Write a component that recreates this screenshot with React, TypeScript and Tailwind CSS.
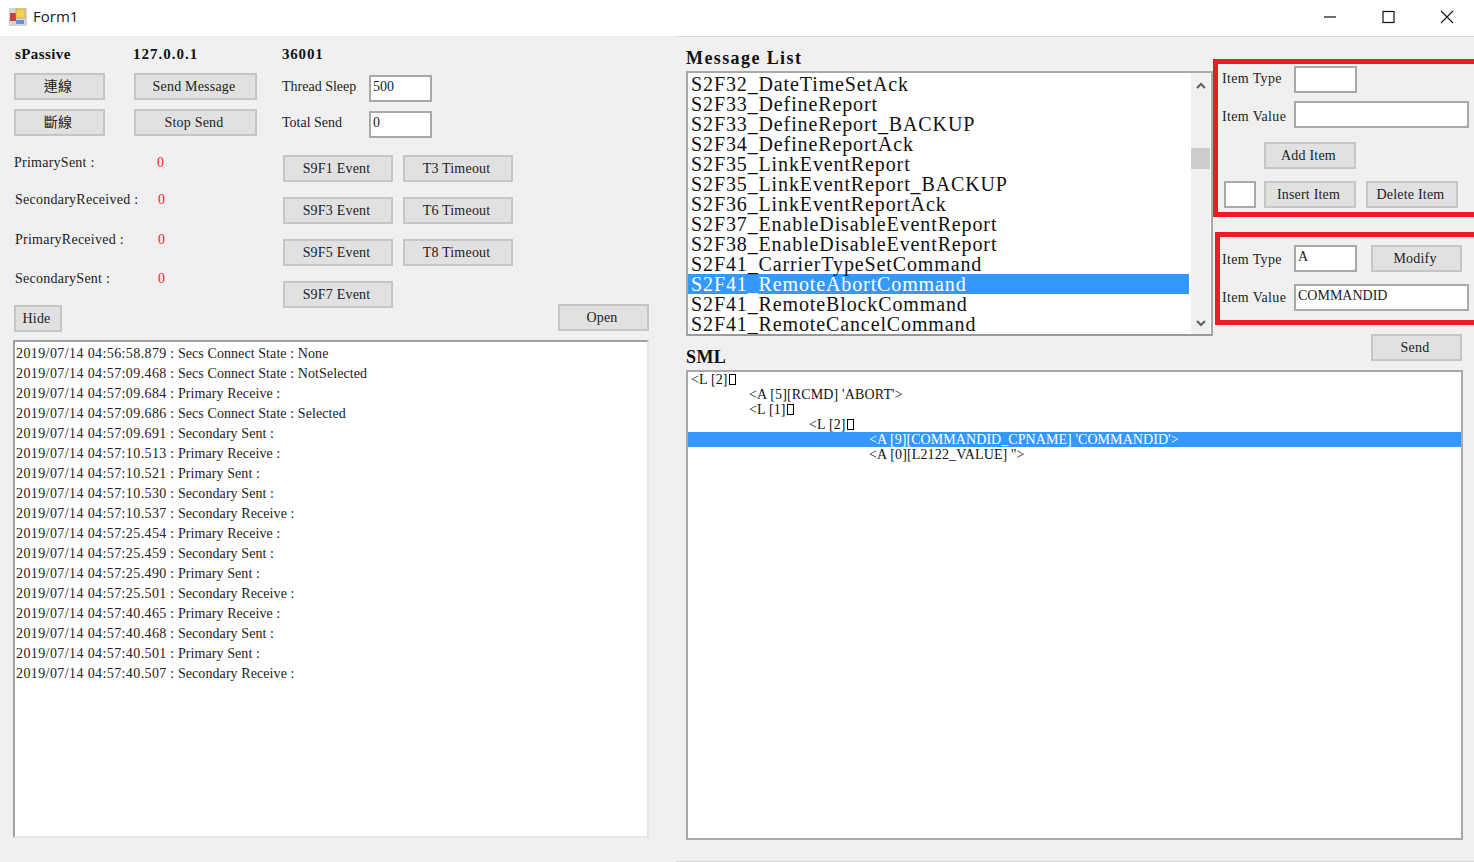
import type { ReactNode } from "react";

const serif = "font-['Liberation_Serif','Noto_Sans_CJK_TC',serif]";

const logLines = [
  "2019/07/14 04:56:58.879 : Secs Connect State : None",
  "2019/07/14 04:57:09.468 : Secs Connect State : NotSelected",
  "2019/07/14 04:57:09.684 : Primary Receive :",
  "2019/07/14 04:57:09.686 : Secs Connect State : Selected",
  "2019/07/14 04:57:09.691 : Secondary Sent :",
  "2019/07/14 04:57:10.513 : Primary Receive :",
  "2019/07/14 04:57:10.521 : Primary Sent :",
  "2019/07/14 04:57:10.530 : Secondary Sent :",
  "2019/07/14 04:57:10.537 : Secondary Receive :",
  "2019/07/14 04:57:25.454 : Primary Receive :",
  "2019/07/14 04:57:25.459 : Secondary Sent :",
  "2019/07/14 04:57:25.490 : Primary Sent :",
  "2019/07/14 04:57:25.501 : Secondary Receive :",
  "2019/07/14 04:57:40.465 : Primary Receive :",
  "2019/07/14 04:57:40.468 : Secondary Sent :",
  "2019/07/14 04:57:40.501 : Primary Sent :",
  "2019/07/14 04:57:40.507 : Secondary Receive :",
];

const messages = [
  "S2F32_DateTimeSetAck",
  "S2F33_DefineReport",
  "S2F33_DefineReport_BACKUP",
  "S2F34_DefineReportAck",
  "S2F35_LinkEventReport",
  "S2F35_LinkEventReport_BACKUP",
  "S2F36_LinkEventReportAck",
  "S2F37_EnableDisableEventReport",
  "S2F38_EnableDisableEventReport",
  "S2F41_CarrierTypeSetCommand",
  "S2F41_RemoteAbortCommand",
  "S2F41_RemoteBlockCommand",
  "S2F41_RemoteCancelCommand",
];

const counters = [
  { label: "PrimarySent :", height: "h-[37px]", indent: "pl-0" },
  { label: "SecondaryReceived :", height: "h-[40px]", indent: "pl-[1px]" },
  { label: "PrimaryReceived :", height: "h-[39px]", indent: "pl-[1px]" },
  { label: "SecondarySent :", height: "h-[26px]", indent: "pl-[1px]" },
];

const Btn = ({ className, children }: { className: string; children: ReactNode }) => (
  <div className={`flex h-[27px] shrink-0 items-center justify-center border-2 border-[#c6c6c6] bg-[#e1e1e1] pr-[3px] text-[14px] tracking-[0.2px] text-[#222] ${className}`}>
    {children}
  </div>
);

const Field = ({ className, children }: { className: string; children?: ReactNode }) => (
  <div className={`h-[27px] shrink-0 border-2 border-[#a9a9a9] bg-white pl-[2px] text-[14px] leading-[20px] text-[#222] ${className}`}>
    {children}
  </div>
);

const Box = () => <span className="ml-[1px] inline-block h-[11px] w-[7px] border border-black align-[-1px]" />;

const SmlLine = ({ indent, selected, children }: { indent: string; selected?: boolean; children: ReactNode }) => (
  <div className={`h-[15px] whitespace-pre text-[14px] leading-[15px] ${indent} ${selected ? "bg-[#3399ff] tracking-[0.07px] text-white" : "tracking-[0.15px] text-[#111]"}`}>
    {children}
  </div>
);

export default function App() {
  return (
    <div className={`flex h-[862px] w-[1474px] flex-col overflow-hidden bg-[#f0f0f0] ${serif}`}>
      {/* title bar */}
      <div className="flex h-[36px] shrink-0 items-center bg-white pb-[3px] pl-[9px]">
        <svg width="18" height="18" viewBox="0 0 18 18">
          <rect x="0" y="0" width="18" height="18" fill="#d4d4d4" />
          <rect x="1" y="5" width="6" height="8" fill="#c8423a" />
          <rect x="7" y="1" width="9" height="9" fill="#f6cf56" stroke="#b89a3a" strokeWidth="0.6" />
          <rect x="7" y="12" width="8" height="4" fill="#5f93e0" />
        </svg>
        <span className="ml-[6px] font-['Open_Sans',sans-serif] text-[15px] text-[#1a1a1a]">Form1</span>
        <div className="ml-auto mr-[-2px] flex items-center">
          <svg width="58" height="16" viewBox="0 0 58 16"><path d="M22 8h12" stroke="#111" strokeWidth="1.2" /></svg>
          <svg width="58" height="16" viewBox="0 0 58 16"><rect x="23" y="2.5" width="11" height="11" fill="none" stroke="#111" strokeWidth="1.2" /></svg>
          <svg width="58" height="16" viewBox="0 0 58 16"><path d="M23 2l12 12M35 2L23 14" stroke="#111" strokeWidth="1.1" /></svg>
        </div>
      </div>

      <div className="flex min-h-0 flex-1">
        {/* left side */}
        <div className="flex w-[676px] shrink-0 flex-col pl-[14px] pt-[8px]">
          <div className="flex">
            <div className="flex w-[268px] shrink-0 flex-col">
              <div className="flex h-[20px] items-center text-[15px] font-bold text-[#111]">
                <span className="w-[119px] pl-[1px] tracking-[0.4px]">sPassive</span>
                <span className="tracking-[1px]">127.0.0.1</span>
              </div>
              <div className="mt-[9px] flex gap-[29px]">
                <Btn className="w-[91px]">連線</Btn>
                <Btn className="w-[123px]">Send Message</Btn>
              </div>
              <div className="mt-[9px] flex gap-[29px]">
                <Btn className="w-[91px]">斷線</Btn>
                <Btn className="w-[123px]">Stop Send</Btn>
              </div>
              <div className="mt-[17px] flex flex-col text-[14px] text-[#222]">
                {counters.map((c) => (
                  <div key={c.label} className={`flex ${c.height} items-start ${c.indent}`}>
                    <span className="w-[143px] shrink-0 whitespace-nowrap leading-[20px] tracking-[0.25px]">{c.label}</span>
                    <span className="leading-[20px] text-[#ff1a1a]">0</span>
                  </div>
                ))}
              </div>
            </div>
            <div className="flex flex-col">
              <div className="flex h-[20px] items-center text-[15px] font-bold tracking-[0.8px] text-[#111]">36001</div>
              <div className="mt-[11px] flex items-center text-[14px] text-[#222]">
                <span className="w-[87px] pb-[4px]">Thread Sleep</span>
                <Field className="w-[63px]">500</Field>
              </div>
              <div className="mt-[9px] flex items-center text-[14px] text-[#222]">
                <span className="w-[87px] pb-[4px]">Total Send</span>
                <Field className="w-[63px]">0</Field>
              </div>
              <div className="mt-[17px] ml-[1px] grid grid-cols-[110px_110px] gap-x-[10px] gap-y-[15px]">
                <Btn className="w-[110px]">S9F1 Event</Btn>
                <Btn className="w-[110px]">T3 Timeout</Btn>
                <Btn className="w-[110px]">S9F3 Event</Btn>
                <Btn className="w-[110px]">T6 Timeout</Btn>
                <Btn className="w-[110px]">S9F5 Event</Btn>
                <Btn className="w-[110px]">T8 Timeout</Btn>
                <Btn className="w-[110px]">S9F7 Event</Btn>
              </div>
            </div>
          </div>
          <div className="mt-[-3px] flex items-start justify-between pr-[27px]">
            <Btn className="w-[48px]">Hide</Btn>
            <Btn className="mt-[-1px] w-[91px]">Open</Btn>
          </div>
          <div className="ml-[-1px] mt-[8px] h-[498px] w-[636px] border-2 border-[#a0a0a0] border-b-[#e6e6e6] border-r-[#e6e6e6] bg-white pl-[1px] pt-[2px] text-[14px] leading-[20px] text-[#222]">
            {logLines.map((line) => (
              <div key={line} className="h-[20px] whitespace-pre tracking-[0.08px]">
                <span className="tracking-[0.4px]">{line.slice(0, 23)}</span>
                {line.slice(23)}
              </div>
            ))}
          </div>
        </div>

        {/* right side */}
        <div className="flex min-w-0 flex-1 flex-col border-b border-t border-[#d8d8d8] pl-[10px]">
          <div className="flex">
            <div className="w-[527px] shrink-0">
              <div className="mt-[10px] h-[24px] text-[18px] font-bold leading-[22px] tracking-[1.4px] text-[#111]">Message List</div>
              <div className="flex h-[265px] border-2 border-[#a9a9a9] border-b-[#9a9a9a] bg-white">
                <div className="min-w-0 flex-1 overflow-hidden pt-[1px] text-[20px] leading-[20px] text-[#111]">
                  {messages.map((m) => (
                    <div
                      key={m}
                      className={`h-[20px] whitespace-pre pl-[3px] tracking-[0.88px] ${m === "S2F41_RemoteAbortCommand" ? "bg-[#3399ff] text-white" : ""}`}
                    >
                      {m}
                    </div>
                  ))}
                </div>
                <div className="ml-[2px] mr-[1px] flex w-[19px] shrink-0 flex-col items-center bg-[#f0f0f0]">
                  <svg width="12" height="8" viewBox="0 0 12 8" className="mt-[9px]"><path d="M2 6l4-4 4 4" fill="none" stroke="#606060" strokeWidth="2" /></svg>
                  <div className="mt-[58px] h-[21px] w-full bg-[#cdcdcd]" />
                  <svg width="12" height="8" viewBox="0 0 12 8" className="mt-auto mb-[7px]"><path d="M2 2l4 4 4-4" fill="none" stroke="#606060" strokeWidth="2" /></svg>
                </div>
              </div>
            </div>
            <div className="flex flex-1 flex-col text-[14px] text-[#222]">
              <div className="mt-[22px] h-[158px] border-[5px] border-r-0 border-[#ed1c24] pl-[4px]">
                <div className="mt-[2px] flex items-center">
                  <span className="w-[72px] pb-[2px] tracking-[0.35px]">Item Type</span>
                  <Field className="w-[63px]" />
                </div>
                <div className="mt-[8px] flex items-center">
                  <span className="w-[72px] pt-[3px] tracking-[0.35px]">Item Value</span>
                  <Field className="w-[175px]" />
                </div>
                <Btn className="ml-[42px] mt-[14px] w-[92px]">Add Item</Btn>
                <div className="mt-[12px] flex items-center">
                  <Field className="ml-[2px] w-[32px]" />
                  <Btn className="ml-[8px] w-[92px]">Insert Item</Btn>
                  <Btn className="ml-[10px] w-[92px]">Delete Item</Btn>
                </div>
              </div>
              <div className="ml-[2px] mt-[15px] h-[93px] border-[5px] border-r-0 border-[#ed1c24] pl-[2px]">
                <div className="mt-[8px] flex items-center">
                  <span className="w-[72px] pt-[2px] tracking-[0.35px]">Item Type</span>
                  <Field className="w-[63px]">A</Field>
                  <Btn className="ml-[14px] w-[91px]">Modify</Btn>
                </div>
                <div className="mt-[12px] flex items-center">
                  <span className="w-[72px] tracking-[0.35px]">Item Value</span>
                  <Field className="w-[175px]">COMMANDID</Field>
                </div>
              </div>
            </div>
          </div>
          <div className="flex h-[34px] items-end pr-[12px]">
            <div className="mb-[1px] h-[24px] text-[18px] font-bold leading-[24px] tracking-[0.4px] text-[#111]">SML</div>
            <Btn className="mb-[9px] ml-auto w-[91px]">Send</Btn>
          </div>
          <div className="h-[470px] w-[777px] border-2 border-[#a9a9a9] bg-white">
            <SmlLine indent="pl-[3px]">&lt;L [2]<Box /></SmlLine>
            <SmlLine indent="pl-[61px]">&lt;A [5][RCMD] 'ABORT'&gt;</SmlLine>
            <SmlLine indent="pl-[61px]">&lt;L [1]<Box /></SmlLine>
            <SmlLine indent="pl-[121px]">&lt;L [2]<Box /></SmlLine>
            <SmlLine indent="pl-[181px]" selected>&lt;A [9][COMMANDID_CPNAME] 'COMMANDID'&gt;</SmlLine>
            <SmlLine indent="pl-[181px]">&lt;A [0][L2122_VALUE] ''&gt;</SmlLine>
          </div>
        </div>
      </div>
    </div>
  );
}
